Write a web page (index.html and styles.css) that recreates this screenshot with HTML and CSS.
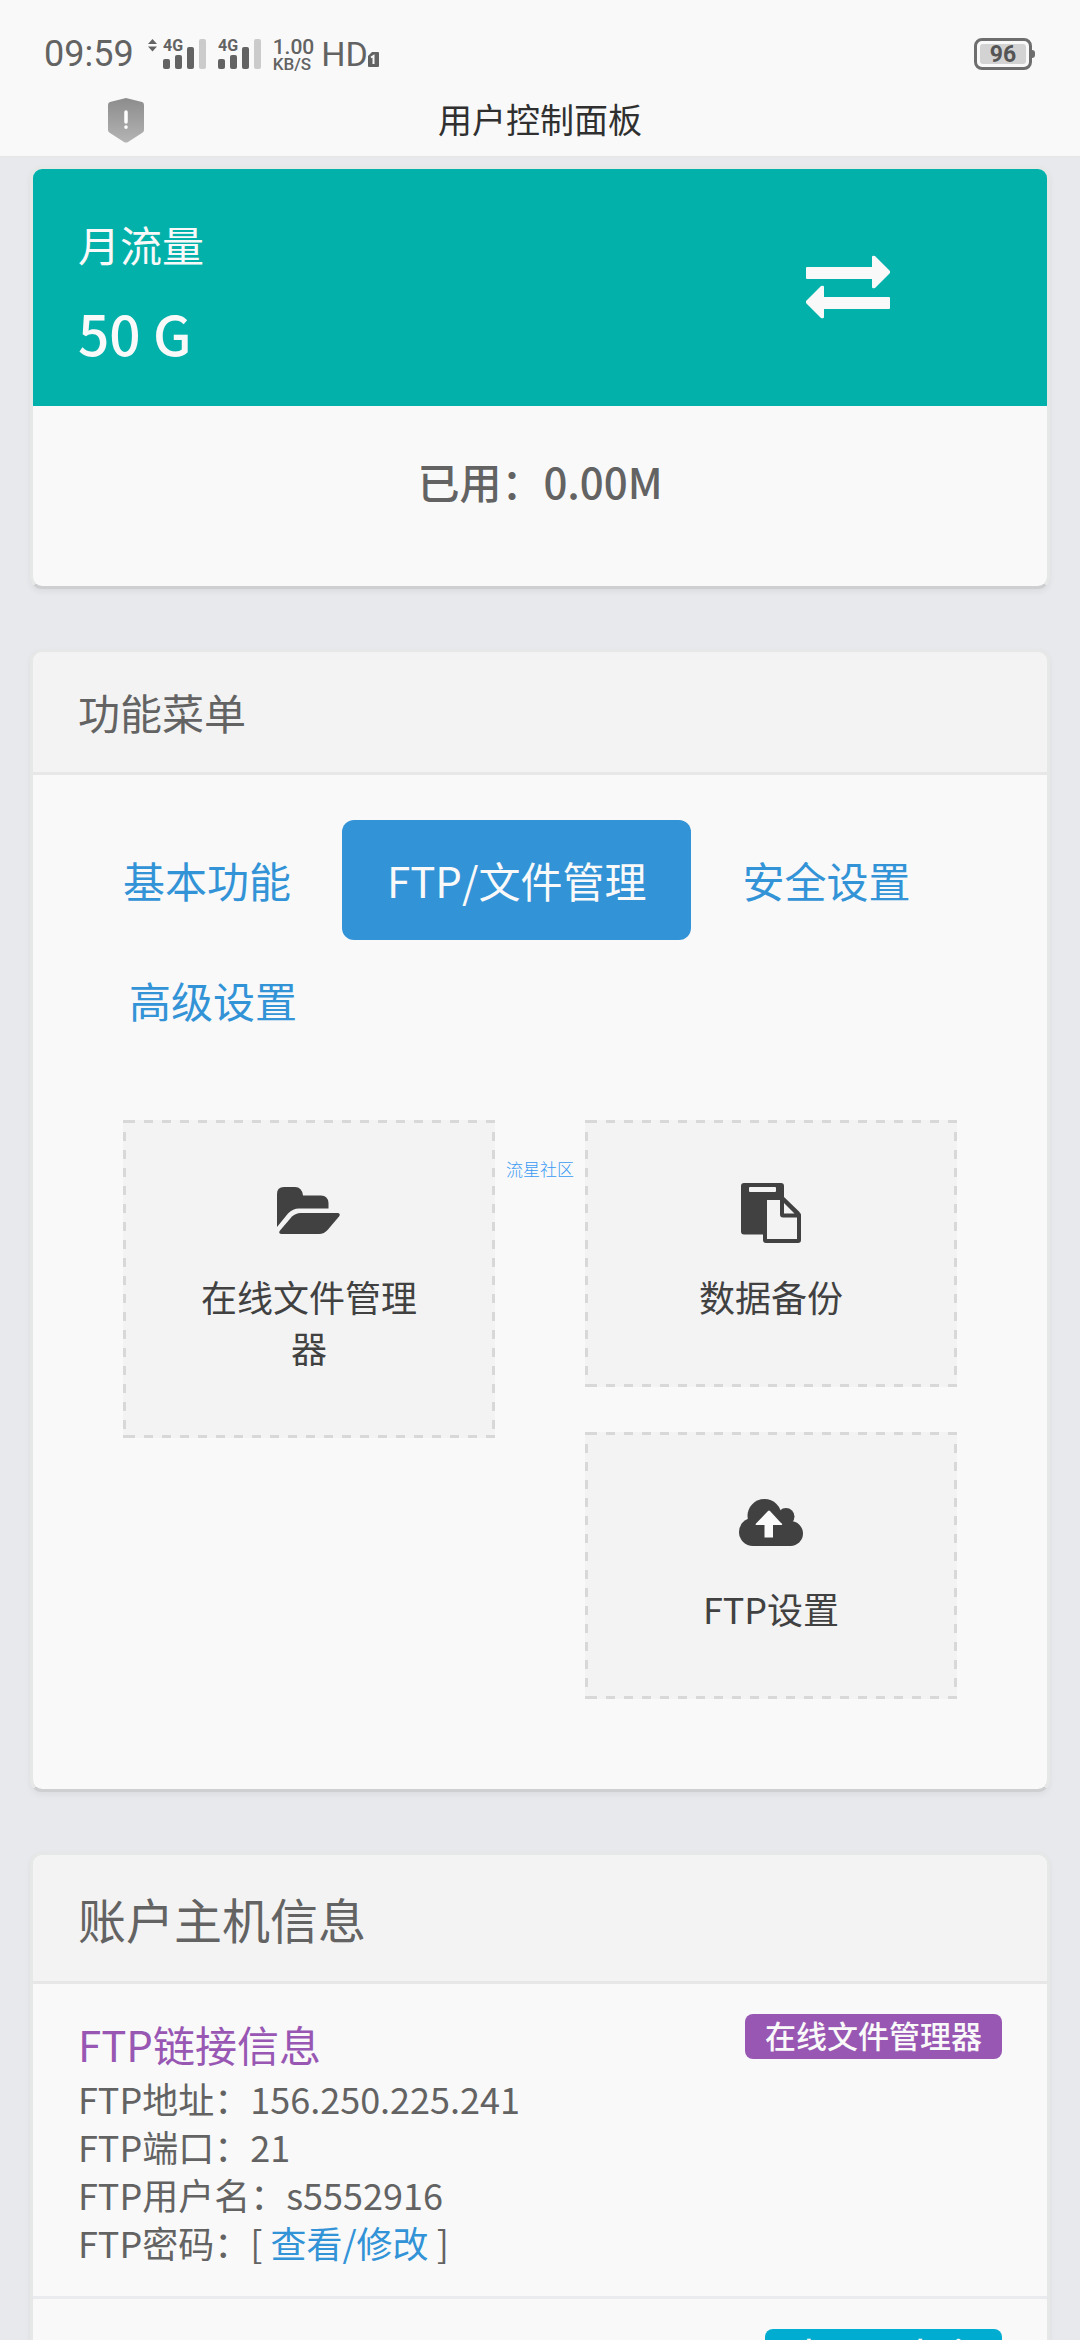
FILE: index.html
```html
<!DOCTYPE html>
<html lang="zh-CN">
<head>
<meta charset="utf-8">
<meta name="viewport" content="width=device-width, initial-scale=1">
<title>用户控制面板</title>
<link rel="stylesheet" href="styles.css">
</head>
<body>
<header class="topbar">
  <div class="status">
    <span class="clock">09:59</span>
    <svg class="updown" width="9" height="13" viewBox="0 0 9 13"><path d="M4.500 0 9 5H0zM0 7.500h9L4.500 12.500z"/></svg>
    <svg class="signal" width="44" height="44" viewBox="0 -6 44 44">
      <text x="0" y="13">4G</text>
      <rect x="0" y="21" width="7" height="10" rx="2"/><rect x="12" y="17" width="7" height="14" rx="2"/><rect x="24" y="9" width="7" height="22" rx="2"/><rect class="off" x="36" y="1" width="7" height="30" rx="2"/>
    </svg>
    <svg class="signal" width="44" height="44" viewBox="0 -6 44 44">
      <text x="0" y="13">4G</text>
      <rect x="0" y="21" width="7" height="10" rx="2"/><rect x="12" y="17" width="7" height="14" rx="2"/><rect x="24" y="9" width="7" height="22" rx="2"/><rect class="off" x="36" y="1" width="7" height="30" rx="2"/>
    </svg>
    <span class="speed"><b>1.00</b><span>KB/S</span></span>
    <span class="hd">HD</span>
    <svg class="sim" width="11" height="15" viewBox="0 0 11 15"><path d="M4 0h6q1 0 1 1v13q0 1-1 1H1q-1 0-1-1V4z"/><path class="one" d="M3 5.500 5.500 4v8"/></svg>
    <span class="battery"><span class="level">96</span></span>
  </div>
  <div class="titlebar">
    <svg class="shield" width="36" height="45" viewBox="0 0 36 45">
      <defs><linearGradient id="sh" x1="0" y1="0" x2="0" y2="1"><stop offset="0" stop-color="#8c8c8c"/><stop offset="1" stop-color="#b4b4b4"/></linearGradient></defs>
      <path fill="url(#sh)" d="M18 0 34 4q2 .5 2 3v25q0 2-2 3L20 44q-2 1-4 0L2 35q-2-1-2-3V7q0-2.500 2-3z"/>
      <path stroke="#fff" stroke-width="3.500" stroke-linecap="round" d="M18 14v10M18 29v.2"/>
    </svg>
    <h1 class="page-title">用户控制面板</h1>
    <span></span>
  </div>
</header>
<main class="content">
  <section class="card">
    <div class="traffic">
      <div class="traffic-text">
        <h2 class="traffic-label">月流量</h2>
        <p class="traffic-total">50 G</p>
      </div>
      <svg width="84" height="66" viewBox="0 0 84 66"><path fill="#f9f9f9" d="M1 12h65V2q0-2 3-1l15 15q1 1 0 2L69 33q-3 1-3-1v-8H1q-1 0-1-1V13q0-1 1-1zM83 42H18V32q0-2-3-1L0 46q-1 1 0 2l15 15q3 1 3-1v-8h65q1 0 1-1V43q0-1-1-1z"/></svg>
    </div>
    <p class="traffic-used">已用：0.00M</p>
  </section>

  <section class="card">
    <h2 class="card-head">功能菜单</h2>
    <div class="card-body">
      <nav class="pills">
        <a class="pill" href="#basic">基本功能</a>
        <a class="pill active" href="#ftp">FTP/文件管理</a>
        <a class="pill" href="#safe">安全设置</a>
        <a class="pill" href="#advanced">高级设置</a>
      </nav>
      <div class="tiles">
        <span class="stamp">流星社区</span>
        <div class="tile-column">
          <a class="tile" href="#files">
            <svg width="64" height="60" viewBox="0 0 64 60"><g fill="#414141"><path d="M0 44V11q0-7 7-7h11q7 0 8 8.500h18q7 0 7.500 7.500v5.500H22q-6 0-11 5z"/><path d="M23.500 30H61q3 1 1 3.500L51 46.500Q47 51 42 51H4q-3-1-1-3.500l12-14q4-3.500 8.500-3.500z"/></g></svg>
            <span>在线文件管理器</span>
          </a>
        </div>
        <div class="tile-column">
          <a class="tile" href="#backup">
            <svg width="60" height="60" viewBox="0 0 60 60"><path fill="#414141" fill-rule="evenodd" d="M3 0h37q3 0 3 3v11l15 14.500q2 2 2 4V57q0 3-3 3H25q-3 0-3-3v-5.500H3q-3 0-3-3V3q0-3 3-3zm6 4q-1 0-1 1v3q0 1 1 1h25q1 0 1-1V5q0-1-1-1zM26 17v39h30V34.500H42q-3 0-3-3V17zm17 3v10.500h10.500z"/></svg>
            <span>数据备份</span>
          </a>
          <a class="tile" href="#ftpset">
            <svg width="64" height="60" viewBox="0 0 64 60"><g fill="#414141"><circle cx="14" cy="37" r="14"/><circle cx="25.500" cy="21" r="17"/><circle cx="47" cy="21.500" r="8.500"/><circle cx="51.500" cy="38.500" r="12.500"/><path d="M14 30h38v21H14z"/></g><path fill="#fbfbfb" d="M29 16q1-1 2 0l11.500 12.500q1 1.500-.5 1.500h-8v12.500h-8.500V30h-8q-1.500 0-.5-1.500z"/></svg>
            <span>FTP设置</span>
          </a>
        </div>
      </div>
    </div>
  </section>

  <section class="card">
    <h2 class="card-head large">账户主机信息</h2>
    <div class="info">
      <div>
        <h3 class="info-title">FTP链接信息</h3>
        <p>FTP地址：156.250.225.241</p>
        <p>FTP端口：21</p>
        <p>FTP用户名：s5552916</p>
        <p>FTP密码：[ <a href="#password">查看/修改</a> ]</p>
      </div>
      <a class="badge" href="#files">在线文件管理器</a>
    </div>
    <div class="info">
      <div></div>
      <a class="badge cyan" href="#db">phpMyAdmin</a>
    </div>
  </section>
</main>
</body>
</html>
```
FILE: styles.css
```css
* { box-sizing: border-box; }
h1, h2, h3, p { margin: 0; font-weight: 400; }
a { color: #3393d7; text-decoration: none; }
svg { display: block; flex: none; }

body {
  margin: 0;
  height: 100vh;
  display: flex;
  flex-direction: column;
  background: #e8e9ed;
  color: #636363;
  font: 36px/48px "Noto Sans CJK SC", sans-serif;
}

/* top bar */
.topbar { flex: none; background: #f9f9f9; border-bottom: 1px solid #e6e6e6; }
.status {
  display: flex;
  align-items: center;
  height: 84px;
  padding: 24px 48px 0 44px;
  color: #636363;
  fill: #636363;
  font-family: Roboto, sans-serif;
  line-height: 1;
}
.clock { font-size: 36px; }
.updown { margin: 0 6px 18px 14px; }
.signal { margin-right: 11px; }
.signal text { font: 700 16px Roboto, sans-serif; }
.signal .off { fill: #cbcbcb; }
.speed { display: flex; flex-direction: column; gap: 1px; }
.speed b { font-size: 21px; line-height: 18px; font-weight: 500; }
.speed span { font-size: 17px; line-height: 14px; font-weight: 500; }
.hd { margin-left: 7px; font-size: 34px; }
.sim { margin-top: 10px; }
.sim .one { fill: none; stroke: #f9f9f9; stroke-width: 2; }
.battery {
  position: relative;
  margin-left: auto;
  width: 58px;
  height: 32px;
  padding: 3px;
  border: 3px solid #6e6e6e;
  border-radius: 8px;
}
.battery::after {
  content: "";
  position: absolute;
  right: -6px;
  top: 9px;
  width: 3px;
  height: 8px;
  border-radius: 0 3px 3px 0;
  background: #6e6e6e;
}
.level {
  display: block;
  border-radius: 3px;
  background: #d3d3d3;
  color: #555;
  font-size: 23px;
  line-height: 22px;
  height: 20px;
  font-weight: 700;
  text-align: center;
}
.titlebar {
  display: grid;
  grid-template-columns: 1fr auto 1fr;
  align-items: center;
  height: 72px;
  padding: 0 108px;
}
.page-title { padding-bottom: 3px; color: #303030; font-size: 34px; line-height: 48px; }

/* cards */
.content { flex: 1; min-height: 0; padding: 9px 30px; overflow-y: auto; scrollbar-width: none; }
.card {
  margin-bottom: 60px;
  overflow: hidden;
  background: #f9f9f9;
  background-clip: padding-box;
  border: 3px solid #e6e7e7;
  border-bottom-color: #cdcfd0;
  border-radius: 12px;
  box-shadow: 0 3px 6px rgba(0, 0, 0, .05);
}
.card-head {
  padding: 30px 45px;
  background: #f3f3f3;
  border-bottom: 3px solid #e7e7e7;
  font-size: 42px;
  line-height: 60px;
}
.card-head.large { font-size: 48px; line-height: 66px; }
.card-body { padding: 45px 45px 90px; }

.traffic {
  display: grid;
  grid-template-columns: 2fr 1fr;
  align-items: center;
  justify-items: center;
  padding: 45px;
  background: #02b2aa;
  color: #f9f9f9;
}
.traffic-text { justify-self: start; display: grid; gap: 30px; }
.traffic-label { font-size: 42px; line-height: 60px; }
.traffic-total { font-size: 55px; line-height: 57px; font-weight: 500; }
.traffic-used { padding: 51px 45px 81px; font-size: 42px; font-weight: 500; text-align: center; }

/* menu */
.pills { display: flex; flex-wrap: wrap; font-kerning: none; }
.pill { padding: 30px 45px; border-radius: 12px; font-size: 42px; line-height: 60px; }
.pill + .pill { margin-left: 6px; }
.pill.active { background: #3393d7; color: #f9f9f9; }

.tiles {
  position: relative;
  display: grid;
  grid-template-columns: 1fr 1fr;
  gap: 90px;
  margin-top: 60px;
  padding: 0 45px;
}
.tile-column { display: flex; flex-direction: column; gap: 45px; }
.tile {
  --dash: #d8d8d8;
  --row: linear-gradient(90deg, var(--dash) 9px, transparent 9px);
  --col: linear-gradient(var(--dash) 9px, transparent 9px);
  --corner: linear-gradient(var(--dash), var(--dash));
  display: flex;
  flex-direction: column;
  align-items: center;
  gap: 28px;
  padding: 63px 63px 65px;
  color: #414141;
  text-align: center;
  line-height: 51px;
  background:
    var(--corner) 0 0 / 3px 3px no-repeat,
    var(--corner) 0 100% / 3px 3px no-repeat,
    var(--row) 3px 0 / 18px 3px repeat-x,
    var(--row) 3px 100% / 18px 3px repeat-x,
    var(--col) 0 12px / 3px 18px repeat-y,
    var(--col) 100% 12px / 3px 18px repeat-y,
    #f3f3f3;
}
.stamp {
  position: absolute;
  left: 50%;
  top: 37px;
  transform: translateX(-50%);
  color: #3b9bf3;
  font-size: 17px;
  line-height: 24px;
  font-weight: 300;
}

/* account info */
.info {
  display: flex;
  justify-content: space-between;
  align-items: flex-start;
  padding: 30px 45px;
  border-bottom: 3px solid #e9ebee;
}
.info-title { color: #9857b3; font-size: 42px; line-height: 60px; }
.badge {
  padding: 0 20px 3px;
  border-radius: 8px;
  background: #9857b3;
  color: #f9f9f9;
  font-size: 31px;
  line-height: 42px;
  font-weight: 500;
}
.badge.cyan { background: #00accf; }
```
